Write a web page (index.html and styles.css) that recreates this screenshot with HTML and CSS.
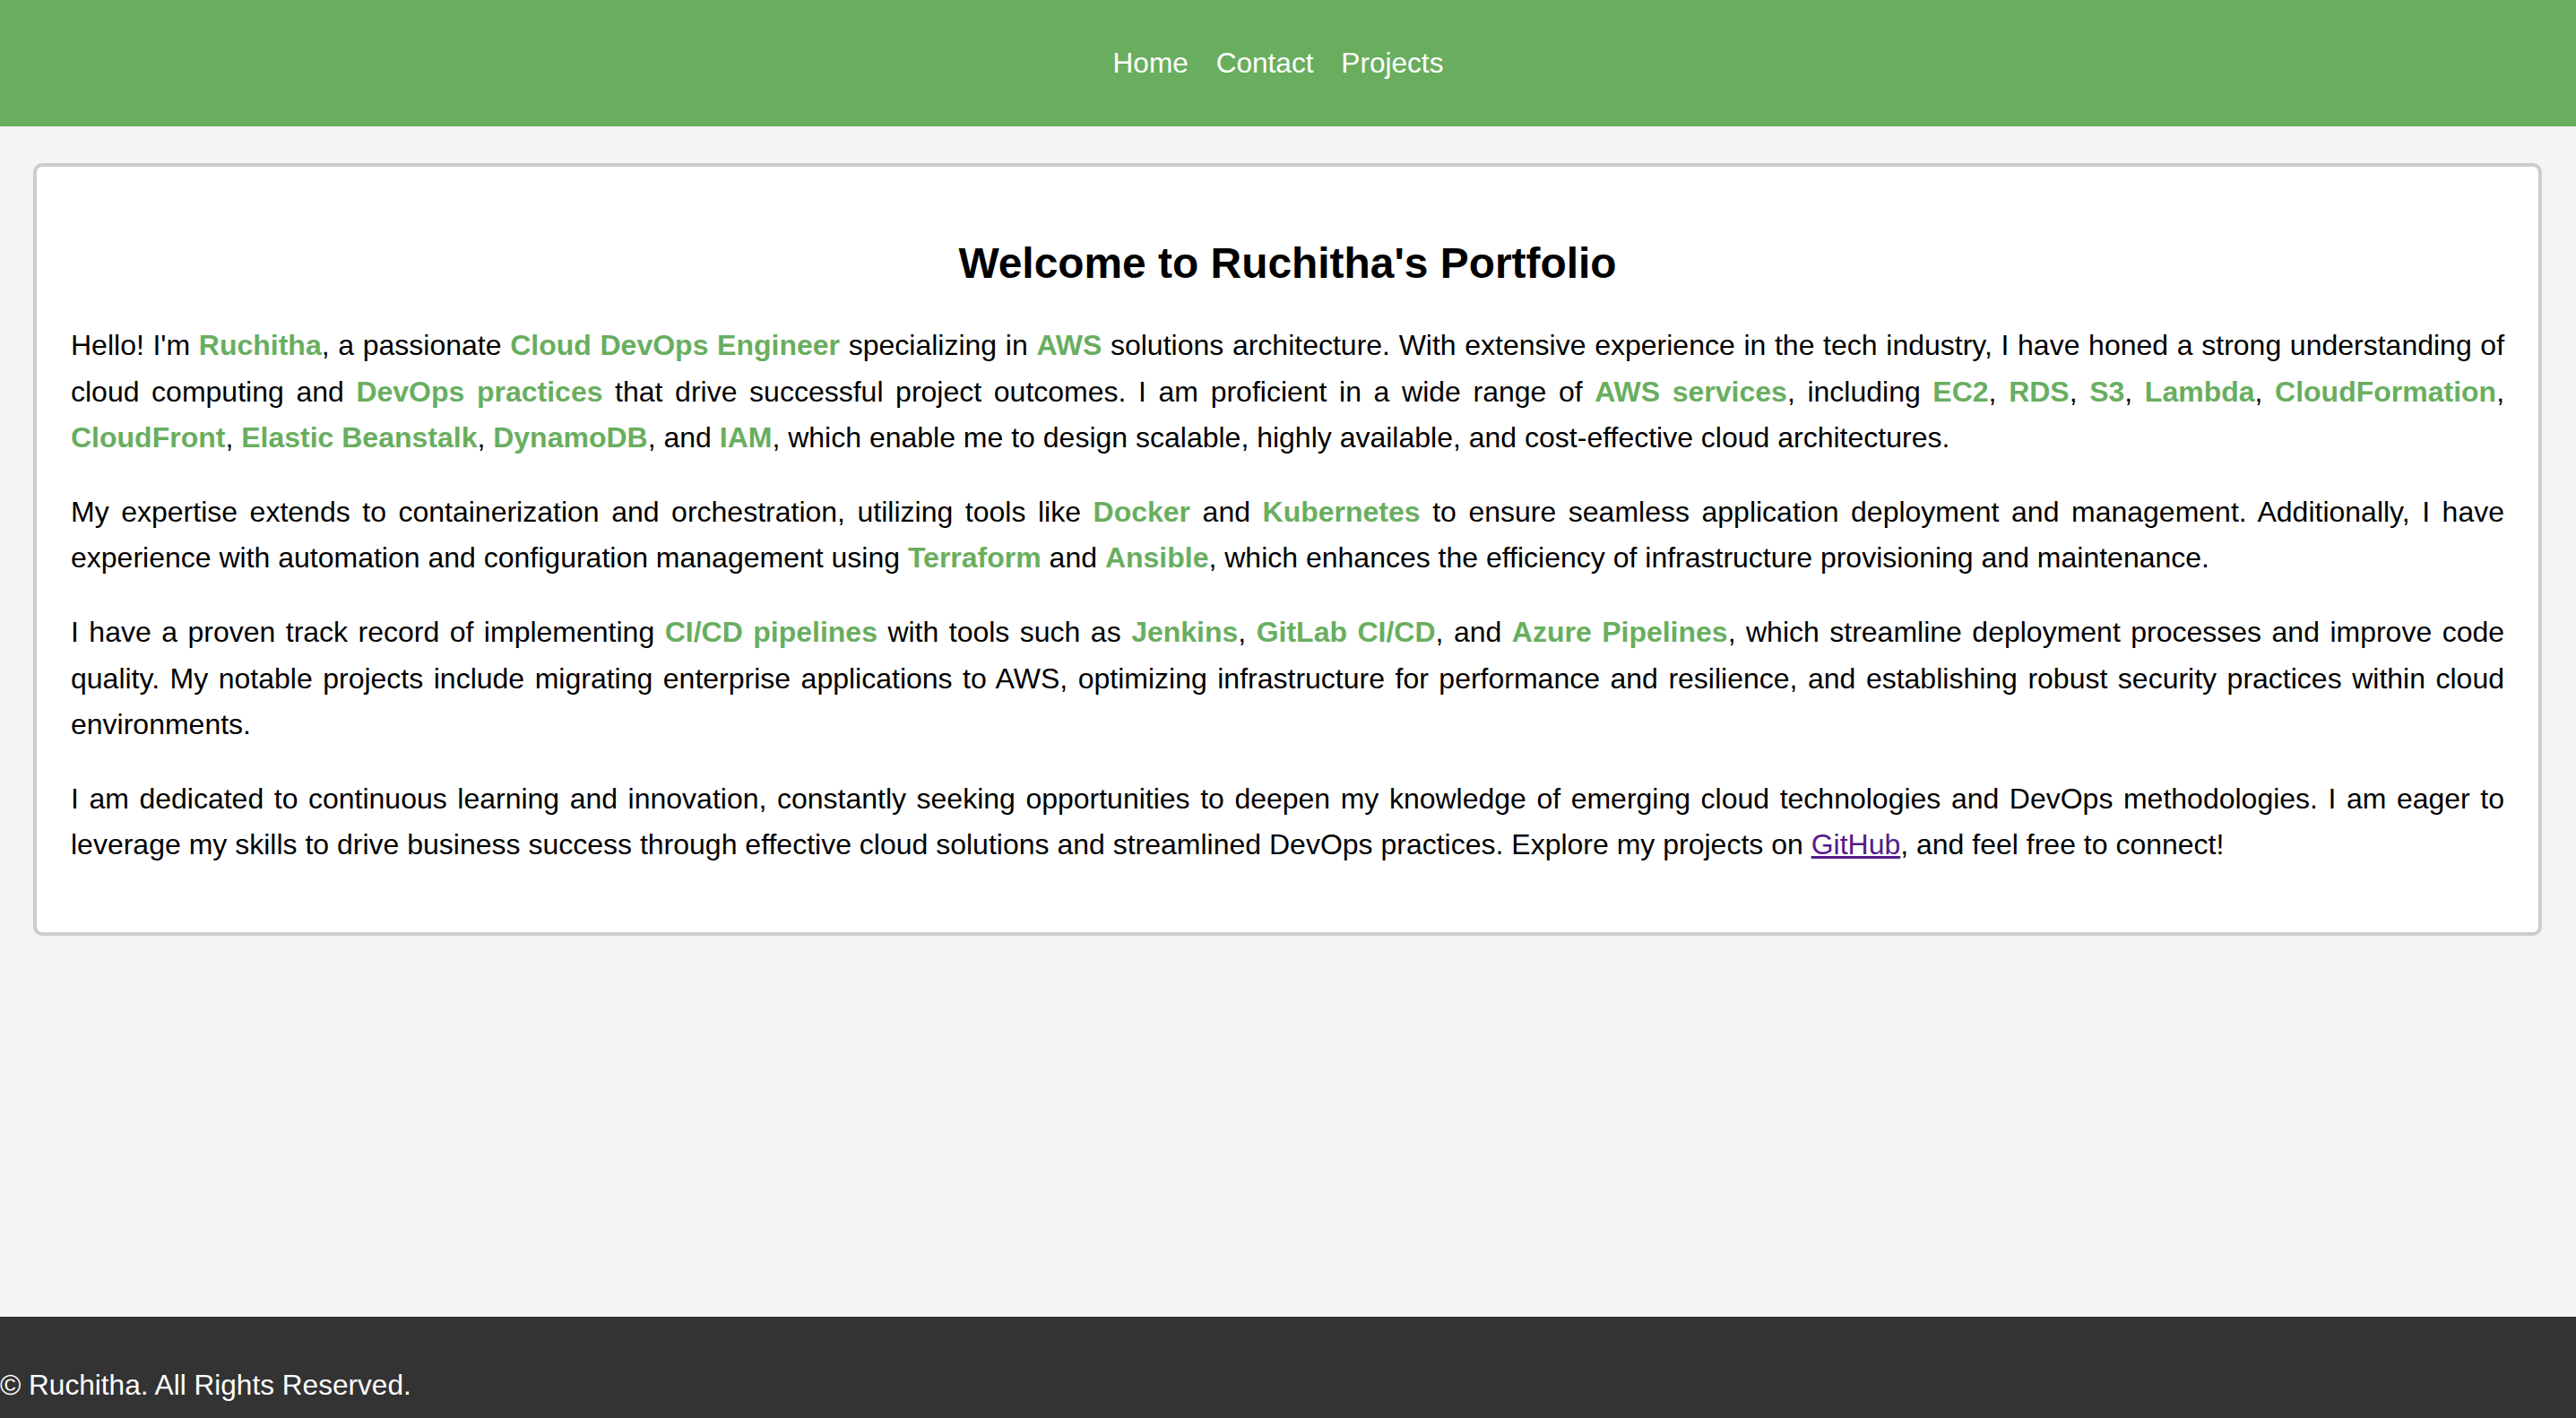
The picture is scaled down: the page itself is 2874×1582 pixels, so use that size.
FILE: index.html
```html
<!DOCTYPE html>
<html lang="en">
<head>
<meta charset="utf-8">
<title>Ruchitha's Portfolio</title>
<link rel="stylesheet" href="styles.css">
</head>
<body>
<header class="site-header">
  <nav>
    <ul class="nav-list">
      <li class="nav-item"><a class="nav-link" href="#">Home</a></li>
      <li class="nav-item"><a class="nav-link" href="#">Contact</a></li>
      <li class="nav-item"><a class="nav-link" href="#">Projects</a></li>
    </ul>
  </nav>
</header>
<main class="main">
  <section class="card">
    <h2 class="title">Welcome to Ruchitha's Portfolio</h2>
    <p class="text">Hello! I'm <strong class="hl">Ruchitha</strong>, a passionate <strong class="hl">Cloud DevOps Engineer</strong> specializing in <strong class="hl">AWS</strong> solutions architecture. With extensive experience in the tech industry, I have honed a strong understanding of cloud computing and <strong class="hl">DevOps practices</strong> that drive successful project outcomes. I am proficient in a wide range of <strong class="hl">AWS services</strong>, including <strong class="hl">EC2</strong>, <strong class="hl">RDS</strong>, <strong class="hl">S3</strong>, <strong class="hl">Lambda</strong>, <strong class="hl">CloudFormation</strong>, <strong class="hl">CloudFront</strong>, <strong class="hl">Elastic Beanstalk</strong>, <strong class="hl">DynamoDB</strong>, and <strong class="hl">IAM</strong>, which enable me to design scalable, highly available, and cost-effective cloud architectures.</p>
    <p class="text">My expertise extends to containerization and orchestration, utilizing tools like <strong class="hl">Docker</strong> and <strong class="hl">Kubernetes</strong> to ensure seamless application deployment and management. Additionally, I have experience with automation and configuration management using <strong class="hl">Terraform</strong> and <strong class="hl">Ansible</strong>, which enhances the efficiency of infrastructure provisioning and maintenance.</p>
    <p class="text">I have a proven track record of implementing <strong class="hl">CI/CD pipelines</strong> with tools such as <strong class="hl">Jenkins</strong>, <strong class="hl">GitLab CI/CD</strong>, and <strong class="hl">Azure Pipelines</strong>, which streamline deployment processes and improve code quality. My notable projects include migrating enterprise applications to AWS, optimizing infrastructure for performance and resilience, and establishing robust security practices within cloud environments.</p>
    <p class="text">I am dedicated to continuous learning and innovation, constantly seeking opportunities to deepen my knowledge of emerging cloud technologies and DevOps methodologies. I am eager to leverage my skills to drive business success through effective cloud solutions and streamlined DevOps practices. Explore my projects on <a class="link" href="#">GitHub</a>, and feel free to connect!</p>
  </section>
</main>
<footer class="site-footer">
  <p class="copy">&copy; Ruchitha. All Rights Reserved.</p>
</footer>
</body>
</html>
```
FILE: styles.css
```css
html, body {
  margin: 0;
  padding: 0;
}

body {
  font-family: "Liberation Sans", Arial, Helvetica, sans-serif;
  font-size: 31.6px;
  color: #000;
  background: #f4f4f4;
  min-height: 100vh;
  display: flex;
  flex-direction: column;
}

.site-header {
  background: #69ae5f;
  height: 141px;
  display: flex;
  align-items: center;
  justify-content: center;
}

.nav-list {
  list-style: none;
  margin: 0;
  padding: 0;
  display: flex;
  gap: 8.8px;
}

.nav-item {
  margin-right: 22px;
}

.nav-link {
  color: #fff;
  text-decoration: none;
  line-height: 1.15;
}

.main {
  flex: 1;
  padding: 41px 38px 0 37px;
}

.card {
  background: #fff;
  border: 4px solid #cccccc;
  border-radius: 10px;
  padding: 40px 38px;
}

.title {
  font-size: 47.9px;
  font-weight: bold;
  text-align: center;
  margin: 39.7px 0;
  line-height: 1.15;
}

.text {
  font-size: 32px;
  margin: 32px 0;
  line-height: 1.6;
  text-align: justify;
}

.hl {
  color: #69ae5f;
  font-weight: bold;
}

.link {
  color: #551a8b;
  text-decoration: underline;
}

.site-footer {
  background: #333333;
  color: #fff;
  height: 113px;
  box-sizing: border-box;
  padding-top: 58px;
}

.copy {
  margin: 0;
  line-height: 36px;
}
```
